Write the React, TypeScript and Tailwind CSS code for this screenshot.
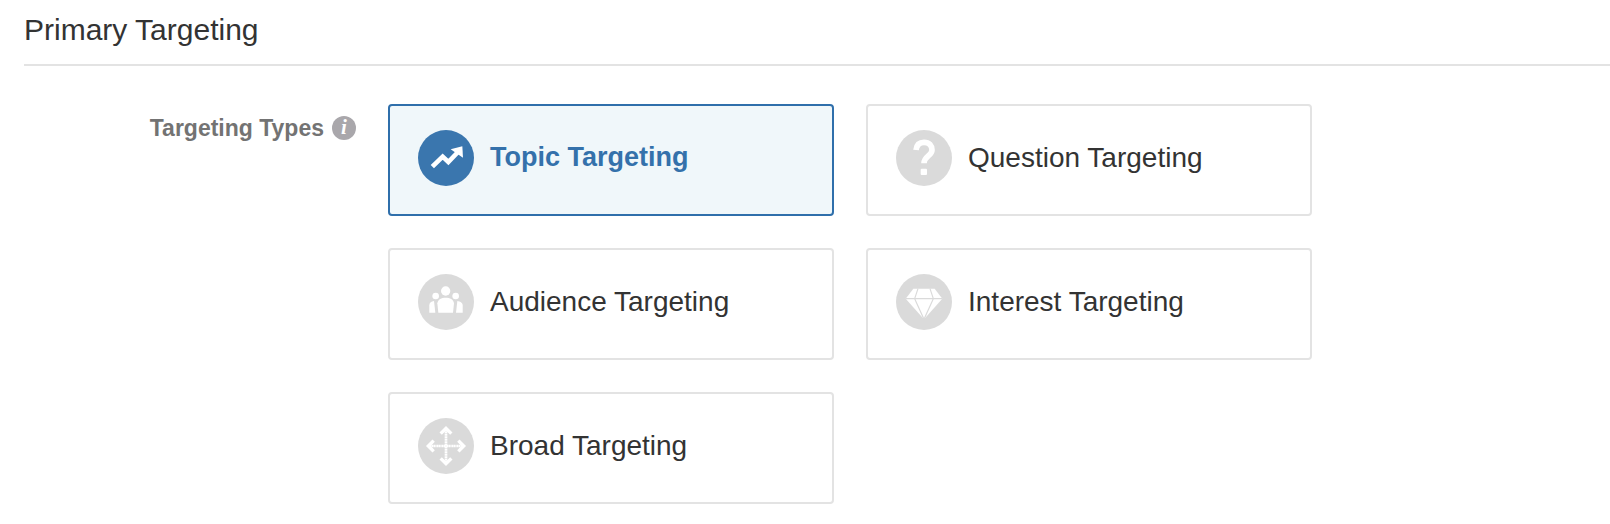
import type { ReactNode } from "react";

function TopicIcon() {
  return (
    <svg viewBox="0 0 168 168" className="w-[56px] h-[56px] shrink-0">
      <circle cx="84" cy="84" r="84" fill="#3a76ae" />
      <polyline points="43,110 74,80 91,96 120,66" fill="none" stroke="#fff" strokeWidth="14" />
      <polygon points="98,58 133,49 135,83" fill="#fff" />
    </svg>
  );
}

function QuestionIcon() {
  return (
    <svg viewBox="0 0 168 168" className="w-[56px] h-[56px] shrink-0">
      <circle cx="84" cy="84" r="84" fill="#dadada" />
      <path d="M60 60 C62 42 72 37 84 37 C100 37 108 47 108 60 C108 78 84 78 84 100" fill="none" stroke="#fff" strokeWidth="17" />
      <rect x="74" y="116" width="19" height="19" rx="3" fill="#fff" />
    </svg>
  );
}

function AudienceIcon() {
  return (
    <svg viewBox="0 0 168 168" className="w-[56px] h-[56px] shrink-0">
      <circle cx="84" cy="84" r="84" fill="#dadada" />
      <circle cx="83" cy="51" r="14" fill="#fff" />
      <circle cx="53" cy="66" r="10" fill="#fff" />
      <circle cx="113" cy="66" r="10" fill="#fff" />
      <path d="M34 116 V94 C34 86 40 82 48 81 L52 116 Z" fill="#fff" />
      <path d="M134 116 V94 C134 86 126 82 118 81 L114 116 Z" fill="#fff" />
      <path d="M61 116 L58 88 C60 76 70 71 83 71 C96 71 106 76 108 88 L105 116 Z" fill="#fff" />
    </svg>
  );
}

function InterestIcon() {
  return (
    <svg viewBox="0 0 168 168" className="w-[56px] h-[56px] shrink-0">
      <circle cx="84" cy="84" r="84" fill="#dadada" />
      <polygon points="52,44 116,44 139,74 84,136 29,74" fill="#fff" />
      <path d="M29 74 H139 M66 44 L56 74 L84 136 L112 74 L102 44" fill="none" stroke="#dadada" strokeWidth="3.5" />
    </svg>
  );
}

function BroadIcon() {
  return (
    <svg viewBox="0 0 168 168" className="w-[56px] h-[56px] shrink-0">
      <circle cx="84" cy="84" r="84" fill="#dadada" />
      <path d="M84 32 V136 M32 84 H136" stroke="#fff" strokeWidth="8" fill="none" strokeDasharray="4 1" />
      <polyline points="68,47 84,31 100,47" fill="none" stroke="#fff" strokeWidth="10" />
      <polyline points="68,121 84,137 100,121" fill="none" stroke="#fff" strokeWidth="10" />
      <polyline points="47,68 31,84 47,100" fill="none" stroke="#fff" strokeWidth="10" />
      <polyline points="121,68 137,84 121,100" fill="none" stroke="#fff" strokeWidth="10" />
    </svg>
  );
}

function TypeCard({ icon, label, selected }: { icon: ReactNode; label: string; selected?: boolean }) {
  return (
    <div
      className={
        selected
          ? "h-[112px] rounded-[4px] border-2 border-[#2f6fab] bg-[#f0f7fa] flex items-center pl-[28px] pb-[5px] gap-[16px] text-[#3471ab]"
          : "h-[112px] rounded-[4px] border-2 border-[#e3e3e3] bg-white flex items-center pl-[28px] pb-[5px] gap-[16px] text-[#333333]"
      }
    >
      {icon}
      <span className={selected ? "text-[27px] font-bold" : "text-[28px]"}>{label}</span>
    </div>
  );
}

export default function App() {
  return (
    <div className="w-[1610px] h-[524px] bg-white overflow-hidden pl-[24px] font-['Liberation_Sans',Arial,sans-serif]">
      <h2 className="h-[66px] pt-[12px] border-b-2 border-[#e3e3e3] text-[30px] leading-[36px] text-[#333333]">
        Primary Targeting
      </h2>
      <div className="flex pt-[38px]">
        <div className="w-[332px] h-[36px] pt-[12px] flex justify-end items-start gap-[8px] text-[#737373]">
          <span className="text-[23px] leading-[24px] font-bold">Targeting Types</span>
          <span className="w-[24px] h-[24px] rounded-full bg-[#a9a7ab] text-white flex items-center justify-center text-[21px] italic font-bold font-['Liberation_Serif',serif]">
            i
          </span>
        </div>
        <div className="ml-[32px] grid grid-cols-[446px_446px] auto-rows-[112px] gap-x-[32px] gap-y-[32px]">
          <TypeCard icon={<TopicIcon />} label="Topic Targeting" selected />
          <TypeCard icon={<QuestionIcon />} label="Question Targeting" />
          <TypeCard icon={<AudienceIcon />} label="Audience Targeting" />
          <TypeCard icon={<InterestIcon />} label="Interest Targeting" />
          <TypeCard icon={<BroadIcon />} label="Broad Targeting" />
        </div>
      </div>
    </div>
  );
}
